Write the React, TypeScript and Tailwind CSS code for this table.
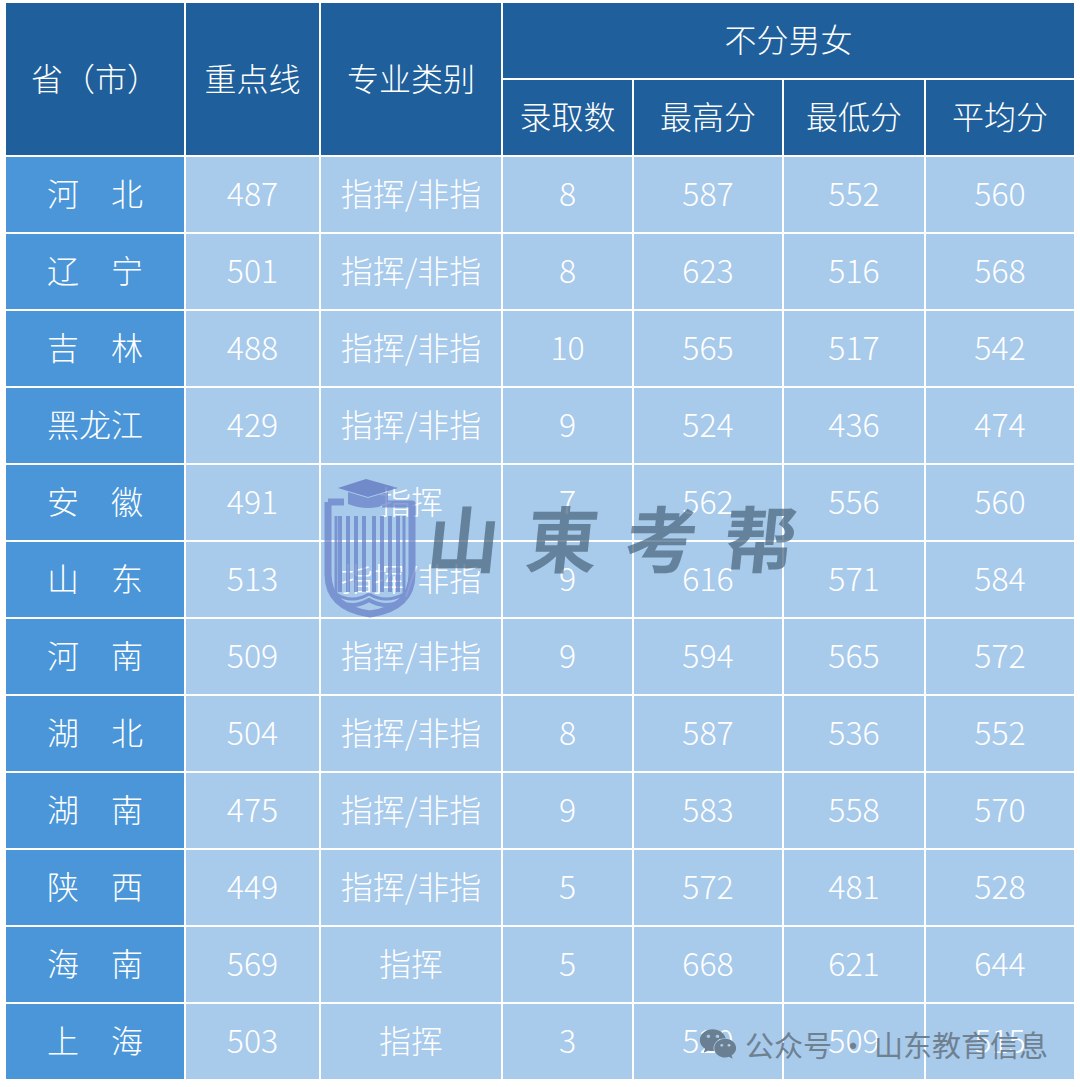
import React from "react";
import { FaWeixin } from "react-icons/fa";

const rows: [string, string, string, string, string, string, string][] = [
  ["河　北", "487", "指挥/非指", "8", "587", "552", "560"],
  ["辽　宁", "501", "指挥/非指", "8", "623", "516", "568"],
  ["吉　林", "488", "指挥/非指", "10", "565", "517", "542"],
  ["黑龙江", "429", "指挥/非指", "9", "524", "436", "474"],
  ["安　徽", "491", "指挥", "7", "562", "556", "560"],
  ["山　东", "513", "指挥/非指", "9", "616", "571", "584"],
  ["河　南", "509", "指挥/非指", "9", "594", "565", "572"],
  ["湖　北", "504", "指挥/非指", "8", "587", "536", "552"],
  ["湖　南", "475", "指挥/非指", "9", "583", "558", "570"],
  ["陕　西", "449", "指挥/非指", "5", "572", "481", "528"],
  ["海　南", "569", "指挥", "5", "668", "621", "644"],
  ["上　海", "503", "指挥", "3", "520", "509", "515"],
];

const font = { fontFamily: '"Noto Sans CJK SC", "Noto Sans", sans-serif' };

function Shield() {
  return (
    <svg width="96" height="142" viewBox="0 0 96 142" className="absolute left-[322px] top-[476px] opacity-75">
      <path
        d="M6 26 L6 98 Q6 132 48 138 Q90 132 90 98 L90 28 L60 28"
        fill="none"
        stroke="#6a82c9"
        strokeWidth="7"
        strokeLinejoin="round"
      />
      <path d="M6 26 L22 26" fill="none" stroke="#6a82c9" strokeWidth="7" />
      <path d="M16 12 L44 3 L76 12 L46 21 Z" fill="#5f76bf" />
      <path d="M26 16 L26 28 Q46 36 66 28 L66 16 L46 22 Z" fill="#6a82c9" />
      {[16, 24, 32, 40, 50, 58, 66, 74].map((x) => (
        <rect key={x} x={x} y="40" width="4" height="76" fill="#6a82c9" />
      ))}
      <path d="M14 40 L14 118 Q30 128 47 118 Q64 128 82 118 L82 40" fill="none" stroke="#6a82c9" strokeWidth="3" />
      <path d="M14 124 Q30 134 47 124 Q64 134 82 124" fill="none" stroke="#6a82c9" strokeWidth="4" />
    </svg>
  );
}

export default function App() {
  const head = "bg-[#1f5f9b] flex items-center justify-center pb-[5px]";
  return (
    <div className="relative w-[1080px] h-[1087px] bg-white overflow-hidden" style={font}>
      <div className="pt-[3px] pl-[6px]">
        <div className="grid grid-cols-[178px_133px_180px_129px_148px_140px_148px] grid-rows-[repeat(14,75px)] gap-[2px] bg-white text-white text-[32px] leading-none font-light">
          <div className={`row-span-2 ${head}`}>省（市）</div>
          <div className={`row-span-2 ${head}`}>重点线</div>
          <div className={`row-span-2 ${head}`}>专业类别</div>
          <div className={`col-span-4 ${head}`}>不分男女</div>
          <div className={head}>录取数</div>
          <div className={head}>最高分</div>
          <div className={head}>最低分</div>
          <div className={head}>平均分</div>
          {rows.map((r, i) => (
            <React.Fragment key={i}>
              <div className="bg-[#4a96d8] flex items-center justify-center pb-[5px]">{r[0]}</div>
              {r.slice(1).map((c, j) => (
                <div key={j} className="bg-[#a8caeb] flex items-center justify-center pb-[5px]">
                  {c}
                </div>
              ))}
            </React.Fragment>
          ))}
        </div>
      </div>

      <Shield />
      <div
        className="absolute left-[428px] top-[500px] text-[72px] leading-none font-bold text-[#4f6b84] opacity-75 tracking-[27px] -skew-x-6 whitespace-nowrap"
        style={font}
      >
        山東考帮
      </div>

      <div className="absolute left-[699px] top-[1025px] flex items-center gap-[8px] text-[#6f8090]">
        <FaWeixin className="w-[38px] h-[38px] text-[#6a8092]" />
        <span className="text-[29px] leading-none whitespace-nowrap" style={font}>
          公众号 · 山东教育信息
        </span>
      </div>
    </div>
  );
}
